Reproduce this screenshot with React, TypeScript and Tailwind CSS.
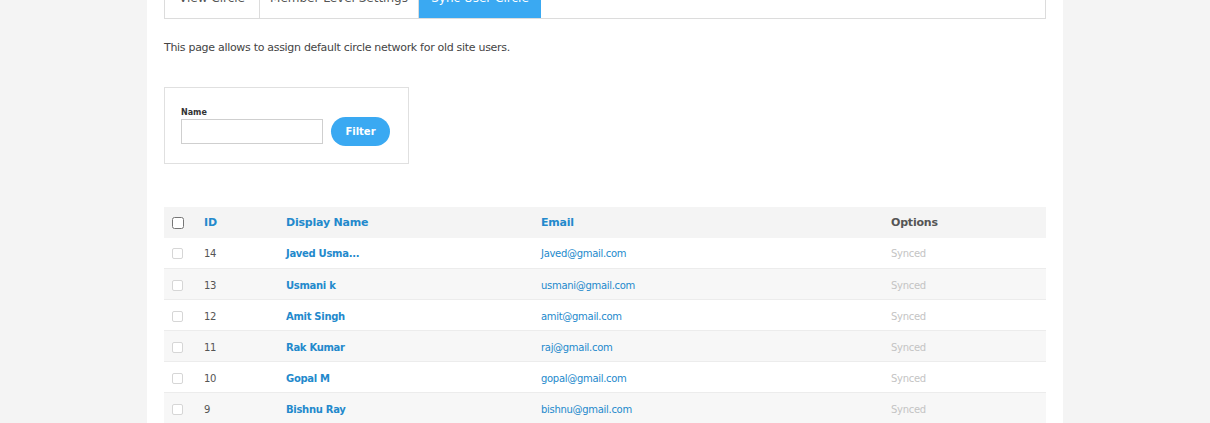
const users = [
  { id: 14, name: "Javed Usma...", email: "Javed@gmail.com" },
  { id: 13, name: "Usmani k", email: "usmani@gmail.com" },
  { id: 12, name: "Amit Singh", email: "amit@gmail.com" },
  { id: 11, name: "Rak Kumar", email: "raj@gmail.com" },
  { id: 10, name: "Gopal M", email: "gopal@gmail.com" },
  { id: 9, name: "Bishnu Ray", email: "bishnu@gmail.com" },
];

const App = () => {
  return (
    <div className="h-[423px] bg-[#f4f4f4] font-['DejaVu_Sans',Verdana,sans-serif] overflow-hidden">
      <div className="mx-auto w-[916px] bg-white px-[17px] pb-6 min-h-[423px]">
        {/* tabs */}
        <div className="-mt-[24px] flex h-[43px] border border-[#dcdcdc] text-[12px] text-[#555]">
          <div className="flex w-[95px] items-center justify-center border-r border-[#dcdcdc]">
            View Circle
          </div>
          <div className="flex w-[159px] items-center justify-center border-r border-[#dcdcdc]">
            Member Level Settings
          </div>
          <div className="flex w-[122px] items-center justify-center bg-[#3aa9f2] text-white">
            Sync User Circle
          </div>
        </div>

        <p className="mt-[21px] text-[11px] tracking-[-0.3px] text-[#444]">
          This page allows to assign default circle network for old site users.
        </p>

        {/* filter */}
        <div className="mt-[30px] flex h-[77px] w-[245px] items-end border border-[#e0e0e0] px-4 pb-[19px]">
          <div className="flex flex-col">
            <label className="text-[8px] font-bold leading-[12px] text-[#333]">Name</label>
            <input
              type="text"
              className="h-[25px] w-[142px] border border-[#cfcfcf] bg-white outline-none"
            />
          </div>
          <button className="mb-[-2px] ml-[8px] h-[29px] w-[59px] rounded-full bg-[#3aa9f2] text-[10px] font-bold text-white">
            Filter
          </button>
        </div>

        {/* table */}
        <table className="mt-[43px] w-full table-fixed border-collapse text-[10px] tracking-[-0.3px]">
          <colgroup>
            <col className="w-[32px]" />
            <col className="w-[82px]" />
            <col className="w-[255px]" />
            <col className="w-[350px]" />
            <col />
          </colgroup>
          <thead>
            <tr className="h-[31px] bg-[#f4f4f4] text-left text-[11px] font-bold tracking-[-0.2px]">
              <th className="pl-[8px] pt-[2px]">
                <input type="checkbox" className="block h-[12px] w-[12px] accent-[#3aa9f2]" />
              </th>
              <th className="pl-[8px] pt-[2px] text-[#2389cc]">ID</th>
              <th className="pl-[8px] pt-[2px] text-[#2389cc]">Display Name</th>
              <th className="pl-[8px] pt-[2px] text-[#2389cc]">Email</th>
              <th className="pl-[8px] pt-[2px] text-[#555]">Options</th>
            </tr>
          </thead>
          <tbody>
            {users.map((u, i) => (
              <tr
                key={u.id}
                className={`h-[31px] border-b border-[#ececec] ${i % 2 === 1 ? "bg-[#f7f7f7]" : "bg-white"}`}
              >
                <td className="pl-[8px] pt-[2px]">
                  <span className="block h-[11px] w-[11px] rounded-[2px] border border-[#d6d6d6] bg-white" />
                </td>
                <td className="pl-[8px] pt-[2px] text-[#555]">{u.id}</td>
                <td className="pl-[8px] pt-[2px] font-bold text-[#2389cc]">{u.name}</td>
                <td className="pl-[8px] pt-[2px] text-[#2389cc]">{u.email}</td>
                <td className="pl-[8px] pt-[2px] text-[#c4c4c4]">Synced</td>
              </tr>
            ))}
          </tbody>
        </table>
      </div>
    </div>
  );
};

export default App;
